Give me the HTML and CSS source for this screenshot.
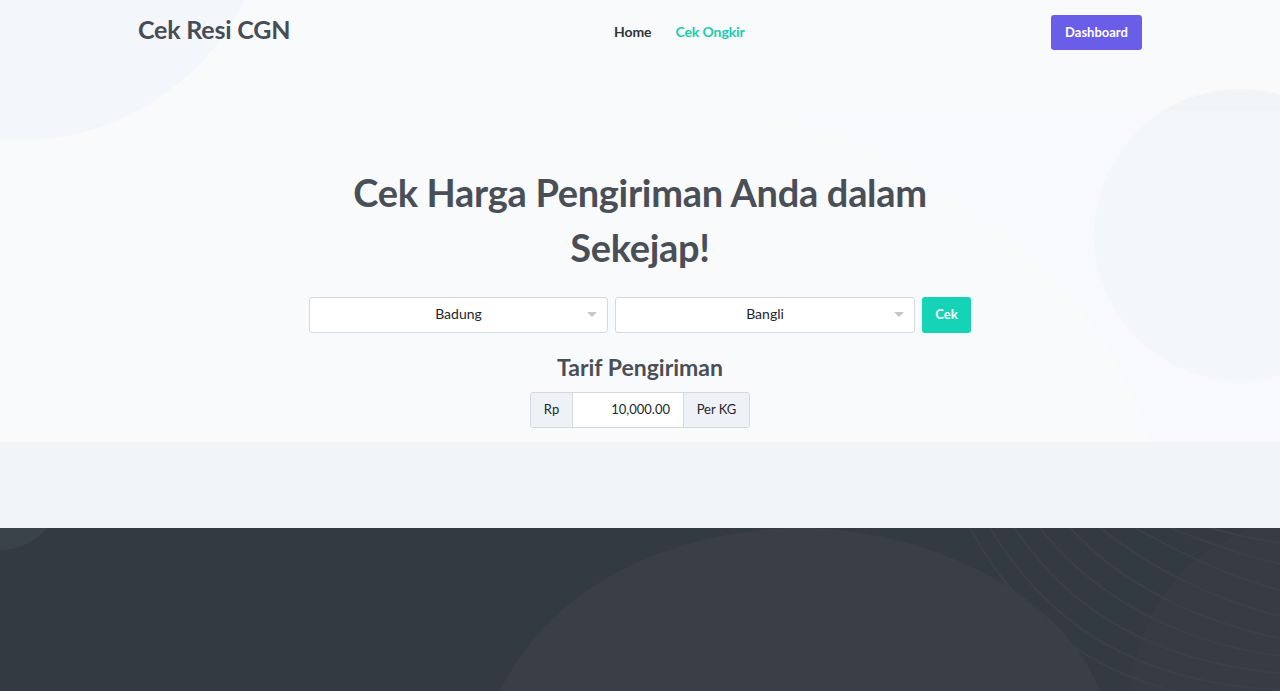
FILE: index.html
```html
<!DOCTYPE html>
<html lang="id">
<head>
<meta charset="utf-8">
<title>Cek Resi CGN</title>
<link rel="stylesheet" href="styles.css">
</head>
<body>
<div class="page">
  <section class="hero">
    <svg class="hero-bg" width="1280" height="442" viewBox="0 0 1280 442" aria-hidden="true">
      <ellipse cx="20" cy="-110" rx="250" ry="250" fill="#f1f5f9" opacity="0.8"/>
      <circle cx="1240" cy="235" r="146" fill="#f1f5f8"/>
      <path d="M760 110 C 900 150, 1100 260, 1150 442 L 1280 442 L 1280 110 Z" fill="#f6f9fb" opacity="0.6"/>
    </svg>
    <header class="topbar">
      <div class="brand">Cek Resi CGN</div>
      <nav class="nav">
        <a class="nav-link">Home</a>
        <a class="nav-link active">Cek Ongkir</a>
      </nav>
      <a class="btn-dashboard">Dashboard</a>
    </header>
    <div class="hero-body">
      <h1 class="title">Cek Harga Pengiriman Anda dalam<br>Sekejap!</h1>
      <form class="check-row">
        <div class="select"><span>Badung</span><i class="caret"></i></div>
        <div class="select"><span>Bangli</span><i class="caret"></i></div>
        <button type="button" class="btn-cek">Cek</button>
      </form>
      <h2 class="subtitle">Tarif Pengiriman</h2>
      <div class="input-group">
        <span class="addon">Rp</span>
        <span class="value">10,000.00</span>
        <span class="addon">Per KG</span>
      </div>
    </div>
  </section>
  <section class="band"></section>
  <footer class="footer">
    <svg class="footer-bg" width="1280" height="163" viewBox="0 0 1280 163" aria-hidden="true">
      <circle cx="0" cy="-40" r="62" fill="#3a4349"/>
      <path d="M500 163 C 560 40, 700 0, 800 0 C 920 0, 1060 60, 1100 163 Z" fill="#3a3f47"/>
      <path d="M1130 163 C 1140 80, 1180 20, 1280 -10 L 1280 163 Z" fill="#373c44"/>
      <g fill="none" stroke="#3b4048" stroke-width="2">
        <path d="M970 0 C 1030 110, 1120 170, 1280 180"/>
        <path d="M990 0 C 1050 100, 1140 155, 1280 162"/>
        <path d="M1015 0 C 1070 85, 1160 135, 1280 145"/>
        <path d="M1040 0 C 1095 70, 1180 115, 1280 128"/>
        <path d="M1070 0 C 1120 55, 1200 95, 1280 110"/>
        <path d="M1100 0 C 1150 40, 1215 72, 1280 88"/>
        <path d="M1135 0 C 1180 25, 1230 50, 1280 62"/>
        <path d="M1170 0 C 1210 15, 1245 28, 1280 36"/>
        <path d="M1210 0 C 1240 8, 1260 12, 1280 15"/>
      </g>
    </svg>
  </footer>
</div>
</body>
</html>
```

FILE: styles.css
```css
* { box-sizing: border-box; }
html, body { margin: 0; padding: 0; }
body {
  font-family: "Lato", "Noto Sans", sans-serif;
  color: #4a4f57;
  background: #343a42;
}
.page { width: 1280px; overflow: hidden; }

.hero {
  position: relative;
  height: 442px;
  background: #f8fafc;
}
.hero-bg { position: absolute; left: 0; top: 0; }

.topbar {
  position: relative;
  display: flex;
  align-items: center;
  justify-content: space-between;
  padding: 15px 138px 0 138px;
  height: 50px;
}
.brand {
  font-size: 25px;
  font-weight: 700;
  color: #474c55;
  margin-top: -7px;
  letter-spacing: -0.2px;
  width: 220px;
}
.nav {
  display: flex;
  gap: 24px;
  margin-left: 256px;
  margin-right: auto;
  margin-top: -2px;
}
.nav-link {
  font-size: 14px;
  font-weight: 700;
  color: #2f343b;
  letter-spacing: -0.1px;
}
.nav-link.active { color: #17ccb0; }
.btn-dashboard {
  display: flex;
  align-items: center;
  justify-content: center;
  width: 91px;
  height: 35px;
  padding-bottom: 2px;
  background: #6a5de8;
  color: #fff;
  font-size: 13px;
  font-weight: 700;
  border-radius: 3px;
}

.hero-body {
  position: relative;
  display: flex;
  flex-direction: column;
  align-items: center;
  padding-top: 115px;
}
.title {
  margin: 0;
  font-size: 38px;
  line-height: 55px;
  font-weight: 700;
  text-align: center;
  color: #4a4f57;
  letter-spacing: -0.3px;
}
.check-row {
  display: flex;
  gap: 7px;
  margin-top: 22px;
  height: 36px;
}
.select {
  position: relative;
  width: 299px;
  height: 36px;
  padding-bottom: 3px;
  background: #fff;
  border: 1px solid #d5d9de;
  border-radius: 3px;
  display: flex;
  align-items: center;
  justify-content: center;
  font-size: 14px;
  color: #22262b;
}
.select + .select { width: 300px; }
.caret {
  position: absolute;
  right: 10px;
  top: 14px;
  width: 0; height: 0;
  border-left: 5px solid transparent;
  border-right: 5px solid transparent;
  border-top: 5px solid #c3c7cc;
}
.btn-cek {
  width: 49px;
  height: 36px;
  border: 0;
  border-radius: 3px;
  background: #14d3b7;
  color: #fff;
  font-family: inherit;
  font-size: 13px;
  font-weight: 700;
  padding: 0 0 3px;
}
.subtitle {
  margin: 19px 0 0;
  font-size: 23px;
  line-height: 30px;
  font-weight: 700;
  color: #4a4f57;
}
.input-group {
  display: flex;
  margin-top: 10px;
  height: 36px;
  border: 1px solid #d5d9de;
  border-radius: 3px;
  overflow: hidden;
  font-size: 13px;
  color: #22262b;
}
.addon {
  display: flex;
  align-items: center;
  justify-content: center;
  background: #eef1f5;
  white-space: nowrap;
  padding-bottom: 2px;
}
.addon:first-child { border-right: 1px solid #d5d9de; width: 42px; }
.addon:last-child { border-left: 1px solid #d5d9de; width: 66px; }
.value {
  display: flex;
  align-items: center;
  justify-content: flex-end;
  width: 110px;
  padding: 0 13px 2px 0;
  background: #fff;
}

.band {
  height: 86px;
  background: #f1f5f8;
}
.footer {
  position: relative;
  height: 163px;
  background: #343a42;
}
.footer-bg { position: absolute; left: 0; top: 0; }
```
